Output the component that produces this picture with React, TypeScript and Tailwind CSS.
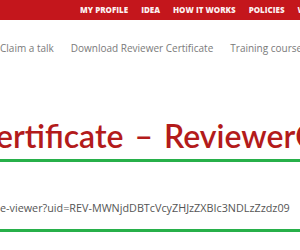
import React from 'react';

const topLinks = ['MY PROFILE', 'IDEA', 'HOW IT WORKS', 'POLICIES', 'WORKSHOPS'];
const subLinks = ['Claim a talk', 'Download Reviewer Certificate', 'Training course'];

export default function App() {
  return (
    <div className="h-[250px] w-[300px] overflow-hidden bg-white">
      {/* Top red menu */}
      <div className="flex h-[20px] items-center overflow-hidden whitespace-nowrap bg-[#c4161c] pl-[80px]">
        <nav className="flex gap-[13px] font-['Open_Sans',sans-serif] text-[8px] font-extrabold text-white/95">
          {topLinks.map((l) => (
            <span key={l}>{l}</span>
          ))}
        </nav>
      </div>

      {/* Secondary menu */}
      <div className="flex h-[55px] items-center overflow-hidden whitespace-nowrap">
        <nav className="flex gap-[17px] pt-[1px] font-['Open_Sans',sans-serif] text-[10px] text-[#7a7a7a]">
          {subLinks.map((l) => (
            <span key={l}>{l}</span>
          ))}
        </nav>
      </div>

      {/* Page title */}
      <div className="overflow-hidden whitespace-nowrap pt-[41px]">
        <h1 className="-ml-[25px] font-['Lato',sans-serif] text-[32px] leading-[40px] font-semibold text-[#b31b1b] [word-spacing:3px]">
          Certificate – ReviewerCertificate
        </h1>
      </div>

      {/* URL box */}
      <div className="mt-[3px] border-y-[3px] border-[#27b04a]">
        <div className="h-[67px] overflow-hidden whitespace-nowrap pt-[38px]">
          <span className="block font-['Open_Sans',sans-serif] text-[10.8px] leading-[15px] text-[#555]">
            e-viewer?uid=REV-MWNjdDBTcVcyZHJzZXBIc3NDLzZzdz09
          </span>
        </div>
      </div>
    </div>
  );
}
